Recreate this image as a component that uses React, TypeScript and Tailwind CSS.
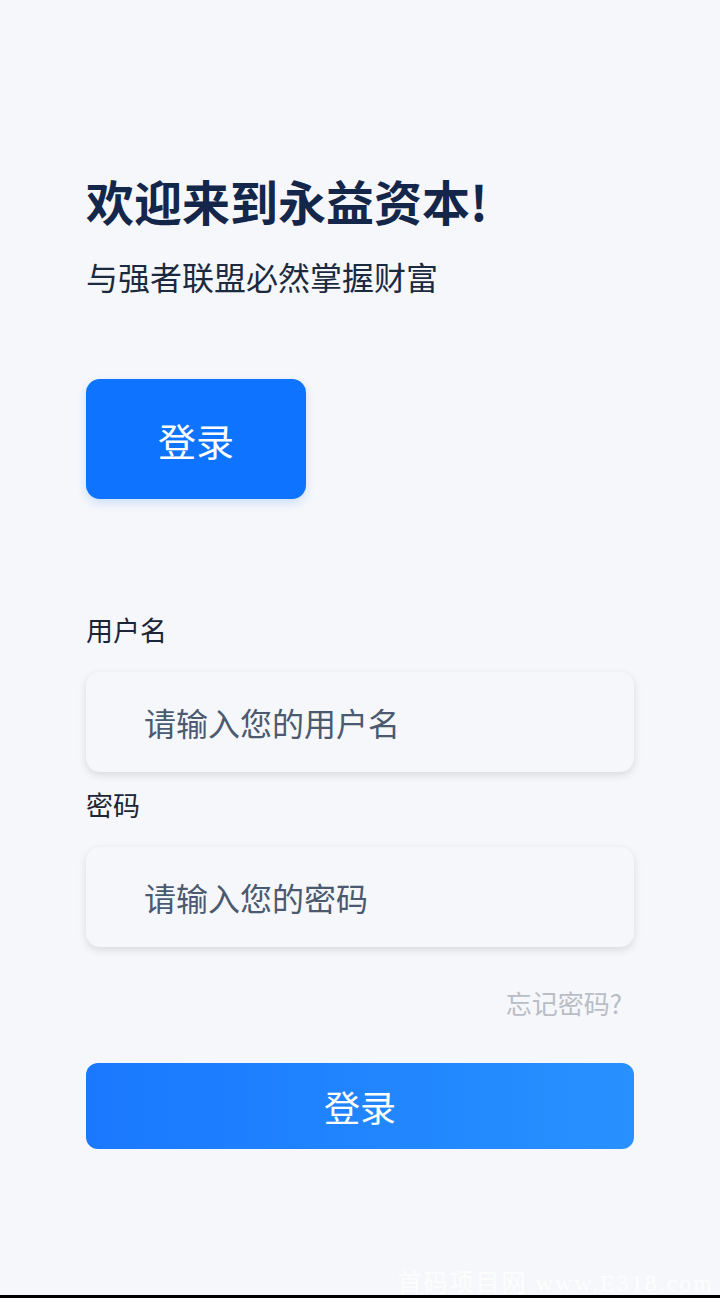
import React from "react";

export default function App() {
  const font = { fontFamily: '"Noto Sans CJK SC", "Noto Sans", sans-serif' };
  return (
    <div className="relative w-[720px] h-[1298px] bg-[#f5f7fa] overflow-hidden" style={font}>
      <div className="px-[86px] pt-[171px] flex flex-col">
        <h1 className="text-[48px] leading-[58px] font-bold text-[#14264a] tracking-[0px]">欢迎来到永益资本!</h1>
        <p className="mt-[27px] text-[32px] leading-[40px] text-[#1c2a40]">与强者联盟必然掌握财富</p>
        <button className="mt-[83px] w-[220px] h-[120px] rounded-[14px] bg-[#0e74ff] text-white text-[38px] shadow-[0_4px_10px_rgba(14,116,255,0.18)] flex items-center justify-center">
          登录
        </button>
        <label className="mt-[113px] text-[27px] leading-[36px] text-[#1c2536]">用户名</label>
        <div className="mt-[24px] h-[100px] rounded-[14px] bg-[#f5f7fa] shadow-[0_3px_8px_rgba(0,0,0,0.12)] flex items-center pl-[58px]">
          <span className="text-[32px] text-[#4b5a70]">请输入您的用户名</span>
        </div>
        <label className="mt-[15px] text-[27px] leading-[36px] text-[#1c2536]">密码</label>
        <div className="mt-[24px] h-[100px] rounded-[14px] bg-[#f5f7fa] shadow-[0_3px_8px_rgba(0,0,0,0.12)] flex items-center pl-[58px]">
          <span className="text-[32px] text-[#4b5a70]">请输入您的密码</span>
        </div>
        <div className="mt-[38px] flex justify-end pr-[12px]">
          <span className="text-[26px] leading-[36px] text-[#b9bdc5]">忘记密码?</span>
        </div>
        <button className="mt-[42px] h-[86px] rounded-[12px] bg-gradient-to-r from-[#1a78ff] to-[#2891ff] text-white text-[36px] flex items-center justify-center">
          登录
        </button>
      </div>
      <div className="absolute bottom-[0px] right-[6px] text-[24px] leading-[30px] text-white/80 tracking-[2px] whitespace-nowrap" style={{ fontFamily: '"Liberation Serif", "Noto Sans CJK SC", serif' }}>
        首码项目网 www.E318.com
      </div>
      <div className="absolute bottom-0 left-0 w-full h-[3px] bg-black" />
    </div>
  );
}
